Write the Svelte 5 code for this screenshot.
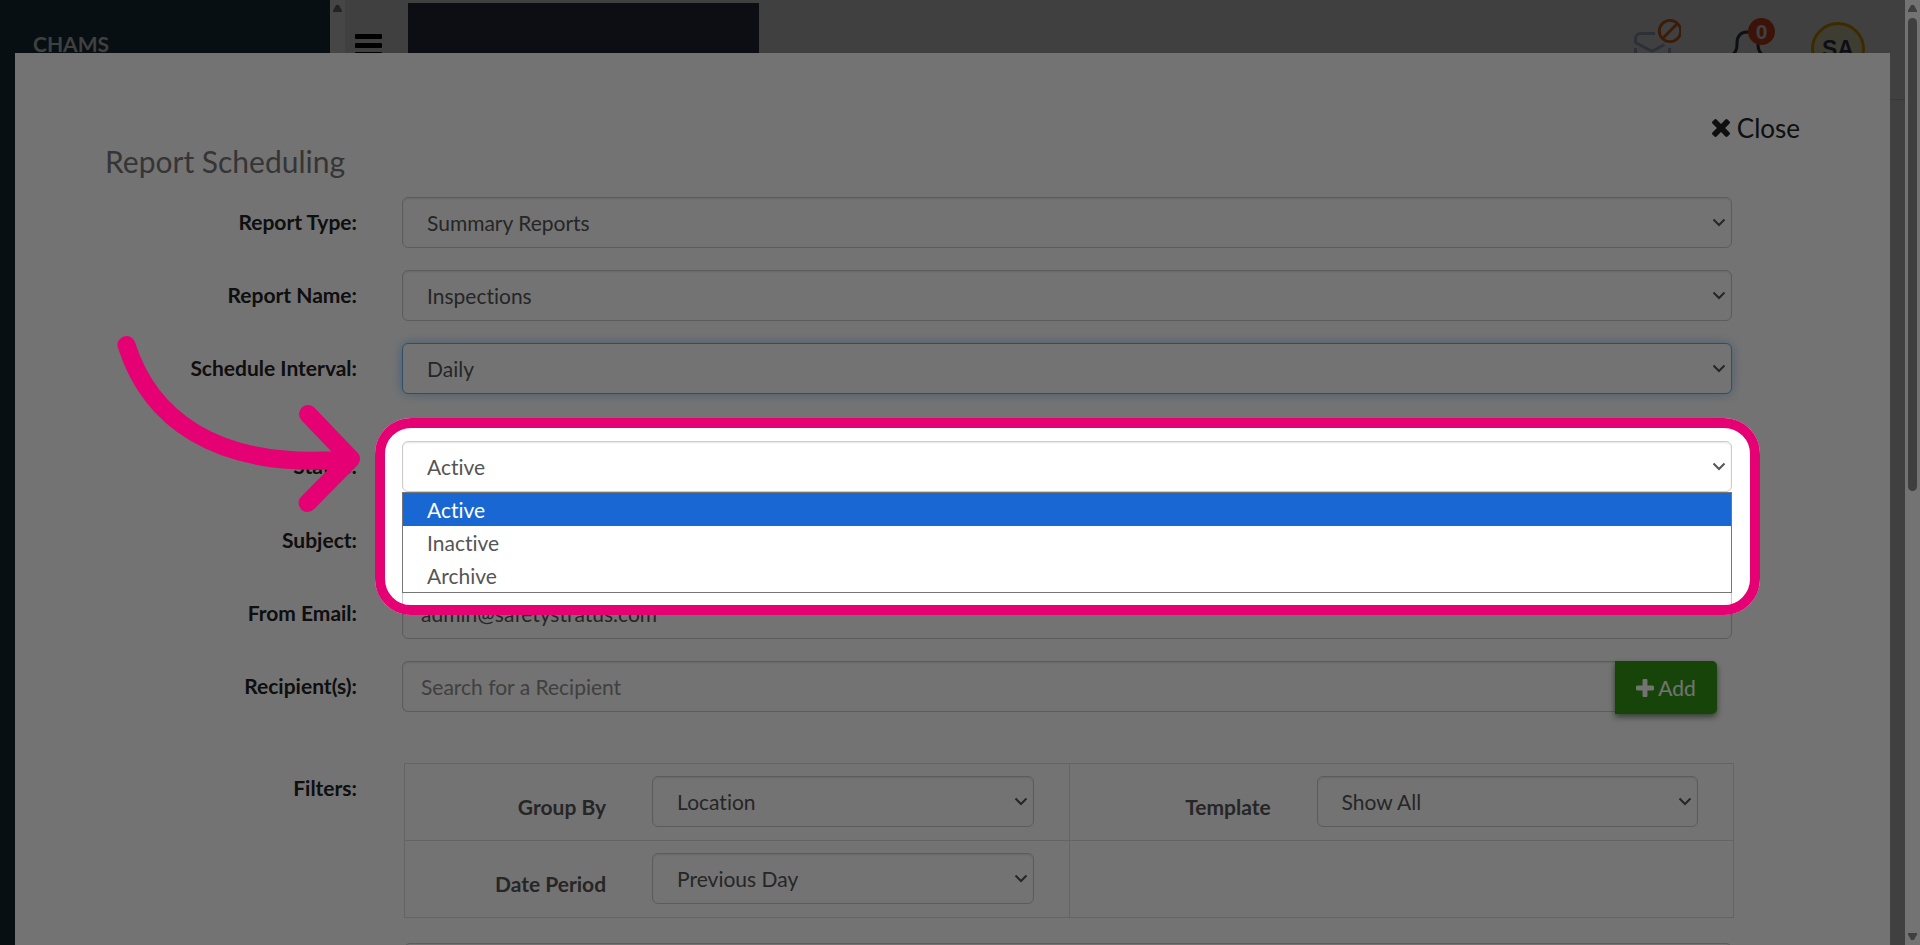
<script lang="ts">
	const topFields = [
		{ id: 'report-type', label: 'Report Type:', value: 'Summary Reports' },
		{ id: 'report-name', label: 'Report Name:', value: 'Inspections' },
		{ id: 'interval', label: 'Schedule Interval:', value: 'Daily', focused: true }
	];

	const statuses = ['Active', 'Inactive', 'Archive'];
	let status = $state('Active');
	let fromEmail = $state('admin@safetystratus.com');
	let subject = $state('');
	let recipient = $state('');
</script>

{#snippet chevron()}
	<svg class="chevron" viewBox="0 0 14 9" aria-hidden="true">
		<path d="M1.5 1.5 7 7l5.5-5.5" />
	</svg>
{/snippet}

{#snippet picker(id: string, value: string, focused = false)}
	<div class="picker">
		<select {id} class="control" class:focused>
			<option>{value}</option>
		</select>
		{@render chevron()}
	</div>
{/snippet}

<div class="shell">
	<aside class="sidebar">
		<span class="brand">CHAMS</span>
	</aside>
	<div class="scrollbar scrollbar--side" aria-hidden="true">
		<span class="arrow"></span>
	</div>

	<div class="main">
		<header class="topbar">
			<button class="menu" type="button" aria-label="Toggle menu">
				<span></span><span></span><span></span>
			</button>
			<div class="banner"></div>
			<div class="tools">
				<svg class="mail" viewBox="0 0 50 50" aria-hidden="true">
					<path
						d="M24 15.5H9.5a5 5 0 0 0-5 5v4l15 8q1.5.8 3 0l11-6M4.500 30v13a5 5 0 0 0 5 5h24a5 5 0 0 0 5-5V30"
						fill="none"
						stroke="#666c7c"
						stroke-width="3"
					/>
					<circle cx="39" cy="13" r="10.7" fill="none" stroke="#853c10" stroke-width="2.8" />
					<path d="m31.5 20.5 15-15" stroke="#853c10" stroke-width="2.8" />
				</svg>
				<svg class="bell" viewBox="0 0 50 50" aria-hidden="true">
					<path
						d="M7 38q7-3 7-11v-2c0-7 4-11 10.5-11S35 18 35 25v2q0 8 7 11Z"
						fill="none"
						stroke="#1c2331"
						stroke-width="3"
					/>
				</svg>
				<span class="count">0</span>
				<button class="avatar" type="button">SA</button>
			</div>
		</header>
	</div>

	<div class="scrollbar" aria-hidden="true">
		<span class="arrow"></span>
		<span class="thumb"></span>
		<span class="arrow arrow--down"></span>
	</div>

	<section class="modal" role="dialog" aria-labelledby="modal-title">
		<div class="modal-head">
			<h1 id="modal-title">Report Scheduling</h1>
			<button class="close" type="button">
				<svg viewBox="302 366 1188 1188" aria-hidden="true">
					<path
						d="M1490 1322q0 40-28 68l-136 136q-28 28-68 28t-68-28l-294-294-294 294q-28 28-68 28t-68-28l-136-136q-28-28-28-68t28-68l294-294-294-294q-28-28-28-68t28-68l136-136q28-28 68-28t68 28l294 294 294-294q28-28 68-28t68 28l136 136q28 28 28 68t-28 68l-294 294 294 294q28 28 28 68z"
					/>
				</svg>
				Close
			</button>
		</div>

		<form class="form">
			{#each topFields as field}
				<div class="row">
					<label for={field.id}>{field.label}</label>
					{@render picker(field.id, field.value, field.focused)}
				</div>
			{/each}

			<div class="row row--status">
				<label for="status">Status:</label>
				<div class="picker">
					<select id="status" class="control" bind:value={status}>
						{#each statuses as name}
							<option value={name}>{name}</option>
						{/each}
					</select>
					{@render chevron()}
					<ul class="options" role="listbox" aria-label="Status">
						{#each statuses as name}
							<li role="option" aria-selected={name === status} class:selected={name === status}>
								{name}
							</li>
						{/each}
					</ul>
					<div class="spotlight"></div>
					<svg class="pointer" viewBox="110 330 260 190" aria-hidden="true">
						<path d="M126.5 345C148 413 210 472 351 459M308 414l43 45-43.500 44" />
					</svg>
				</div>
			</div>

			<div class="row">
				<label for="subject">Subject:</label>
				<input id="subject" class="control" type="text" bind:value={subject} />
			</div>

			<div class="row">
				<label for="from-email">From Email:</label>
				<input id="from-email" class="control" type="text" bind:value={fromEmail} />
			</div>

			<div class="row">
				<label for="recipients">Recipient(s):</label>
				<div class="group">
					<input
						id="recipients"
						class="control"
						type="text"
						placeholder="Search for a Recipient"
						bind:value={recipient}
					/>
					<button class="add" type="button">
						<svg viewBox="192 128 1408 1408" aria-hidden="true">
							<path
								d="M1600 736v192q0 40-28 68t-68 28h-416v416q0 40-28 68t-68 28h-192q-40 0-68-28t-28-68v-416h-416q-40 0-68-28t-28-68v-192q0-40 28-68t68-28h416v-416q0-40 28-68t68-28h192q40 0 68 28t28 68v416h416q40 0 68 28t28 68z"
							/>
						</svg>
						Add
					</button>
				</div>
			</div>

			<div class="row row--filters">
				<span class="label">Filters:</span>
				<div class="filters">
					<div class="filter">
						<label for="group-by">Group By</label>
						{@render picker('group-by', 'Location')}
					</div>
					<div class="filter">
						<label for="template">Template</label>
						{@render picker('template', 'Show All')}
					</div>
					<div class="filter">
						<label for="date-period">Date Period</label>
						{@render picker('date-period', 'Previous Day')}
					</div>
					<div class="filter"></div>
				</div>
			</div>

			<div class="row">
				<span></span>
				<div class="panel"></div>
			</div>
		</form>
	</section>
</div>

<style>
	:global(body) {
		overflow: hidden;
	}

	.shell {
		position: relative;
		display: flex;
		height: 100vh;
		overflow: hidden;
		background: #8e8e8e;
		font-family: Lato, 'Open Sans', sans-serif;
		font-size: 21px;
		font-variant-ligatures: none;
		line-height: 30px;
		color: #555;
	}

	.shell * {
		box-sizing: border-box;
	}

	button,
	input,
	select {
		margin: 0;
		font: inherit;
		font-variant-ligatures: none;
	}

	.sidebar {
		width: 330px;
		padding: 29px 33px;
		background: #12232a;
	}

	.brand {
		font-weight: 700;
		color: #8e8e8e;
	}

	.scrollbar {
		display: flex;
		flex-direction: column;
		align-items: center;
		width: 15px;
		padding: 5px 0;
		background: #fefefe;
	}

	.scrollbar--side {
		background: #9c9c9c;
	}

	.arrow {
		width: 9px;
		height: 7px;
		background: #8c8c8c;
		clip-path: polygon(35% 0, 65% 0, 100% 80%, 100% 100%, 0 100%, 0 80%);
	}

	.scrollbar--side .arrow {
		background: #4e4e4e;
	}

	.arrow--down {
		margin-top: auto;
		transform: rotate(180deg);
	}

	.thumb {
		width: 9px;
		height: 50vh;
		margin-top: 6px;
		border-radius: 5px;
		background: #8c8c8c;
	}

	.main {
		flex: 1;
	}

	.topbar {
		display: flex;
		height: 100px;
		padding: 3px 0 0 9px;
		border-bottom: 1px solid #7c7c7c;
	}

	.menu {
		display: flex;
		flex-direction: column;
		gap: 4px;
		width: 54px;
		padding: 31px 26px 0 1px;
		border: 0;
		background: none;
	}

	.menu span {
		height: 5px;
		border-radius: 1px;
		background: #000;
	}

	.banner {
		width: 351px;
		height: 80px;
		background: #1b212c;
	}

	.tools {
		display: flex;
		align-items: flex-start;
		margin-left: auto;
		padding-right: 40px;
	}

	.mail,
	.bell {
		width: 50px;
		height: 50px;
		margin-top: 15px;
	}

	.bell {
		margin-left: 42px;
	}

	.count {
		width: 27px;
		height: 27px;
		margin: 15px 36px 0 -25px;
		border-radius: 50%;
		background: #852b14;
		color: #8e8e8e;
		font: 700 21px/27px 'Liberation Sans', sans-serif;
		text-align: center;
	}

	.avatar {
		width: 54px;
		height: 54px;
		margin-top: 19px;
		padding: 0;
		border: 3px solid #8a5e00;
		border-radius: 50%;
		background: #8a8770;
		color: #1c2331;
		font: 700 23px/48px 'Liberation Sans', sans-serif;
	}

	.modal {
		position: absolute;
		inset: 53px 30px 0 15px;
		background: #fff;
	}

	.modal-head {
		display: flex;
		justify-content: space-between;
		padding: 55px 90px 0;
	}

	h1 {
		margin: 33px 0 0;
		font-size: 30px;
		font-weight: 400;
		line-height: 40px;
		color: #777;
	}

	.close {
		display: flex;
		align-items: center;
		gap: 7px;
		height: 40px;
		padding: 0;
		border: 0;
		background: none;
		color: #222;
		font-size: 26px;
	}

	.close svg,
	.add svg {
		width: 18px;
		height: 18px;
		fill: currentColor;
	}

	.form {
		display: grid;
		gap: 22px;
		padding: 16px 158px 0 0;
	}

	.row {
		display: grid;
		grid-template-columns: 342px 1fr;
		gap: 45px;
		align-items: start;
	}

	.row--status {
		margin: 25px 0 1px;
	}

	.row--filters {
		margin: 29px 0 3px;
	}

	label,
	.label {
		font-weight: 700;
		line-height: 50px;
		text-align: right;
		color: #222;
	}

	.picker {
		position: relative;
	}

	.control {
		display: block;
		width: 100%;
		height: 51px;
		padding: 0 18px;
		border: 1px solid #ccc;
		border-radius: 6px;
		outline: 0;
		background: #fff;
		box-shadow: inset 0 1px 2px rgba(0, 0, 0, 0.1);
		color: #555;
	}

	select.control {
		padding: 0 24px;
		appearance: none;
	}

	.control::placeholder {
		color: #8e8e8e;
	}

	.control.focused {
		border-color: #66afe9;
		box-shadow: 0 0 12px rgba(102, 175, 233, 0.6);
	}

	.chevron {
		position: absolute;
		top: 21px;
		right: 6px;
		width: 14px;
		height: 9px;
		fill: none;
		stroke: #555;
		stroke-width: 2;
		pointer-events: none;
	}

	.options {
		position: absolute;
		top: 100%;
		left: 0;
		right: 0;
		z-index: 1;
		margin: 0;
		padding: 0;
		border: 1px solid #767676;
		background: #fff;
		list-style: none;
	}

	.options li {
		padding: 0 24px;
		line-height: 33px;
	}

	.options .selected {
		background: #1967d2;
		color: #fff;
	}

	/* the huge shadow dims everything outside the frame */
	.spotlight {
		position: absolute;
		top: -23px;
		left: -27px;
		right: -28px;
		z-index: 2;
		height: 197px;
		border: 10px solid #e50073;
		border-radius: 36px;
		box-shadow: 0 0 0 9999px rgba(0, 0, 0, 0.55);
		pointer-events: none;
	}

	.pointer {
		position: absolute;
		top: -111px;
		left: -292px;
		z-index: 3;
		width: 260px;
		height: 190px;
		fill: none;
		stroke: #e50073;
		stroke-width: 18;
		stroke-linecap: round;
		stroke-linejoin: round;
		pointer-events: none;
	}

	.group {
		display: flex;
		align-items: flex-start;
		padding-right: 15px;
	}

	.group .control {
		flex: 1;
		border-right: 0;
		border-radius: 6px 0 0 6px;
	}

	.add {
		display: flex;
		align-items: center;
		justify-content: center;
		gap: 4px;
		width: 102px;
		height: 53px;
		margin-bottom: -2px;
		padding: 0;
		border: 0;
		border-radius: 0 5px 5px 0;
		background: #339914;
		box-shadow: 0 3px 6px rgba(20, 60, 10, 0.6);
		color: #fff;
	}

	.filters {
		display: grid;
		grid-template-columns: 1fr 1fr;
		margin: 0 -2px 0 2px;
		border: solid #ddd;
		border-width: 1px 0 0 1px;
	}

	.filter {
		display: grid;
		grid-template-columns: 32% 1fr;
		gap: 46px;
		padding: 12px 35px 13px 0;
		border: solid #ddd;
		border-width: 0 1px 1px 0;
	}

	.filter label {
		padding-top: 11px;
		line-height: 40px;
		color: #555;
	}

	.panel {
		height: 80px;
		margin: 0 0 0 2px;
		border: 1px solid #ccc;
		border-radius: 6px;
	}
</style>
